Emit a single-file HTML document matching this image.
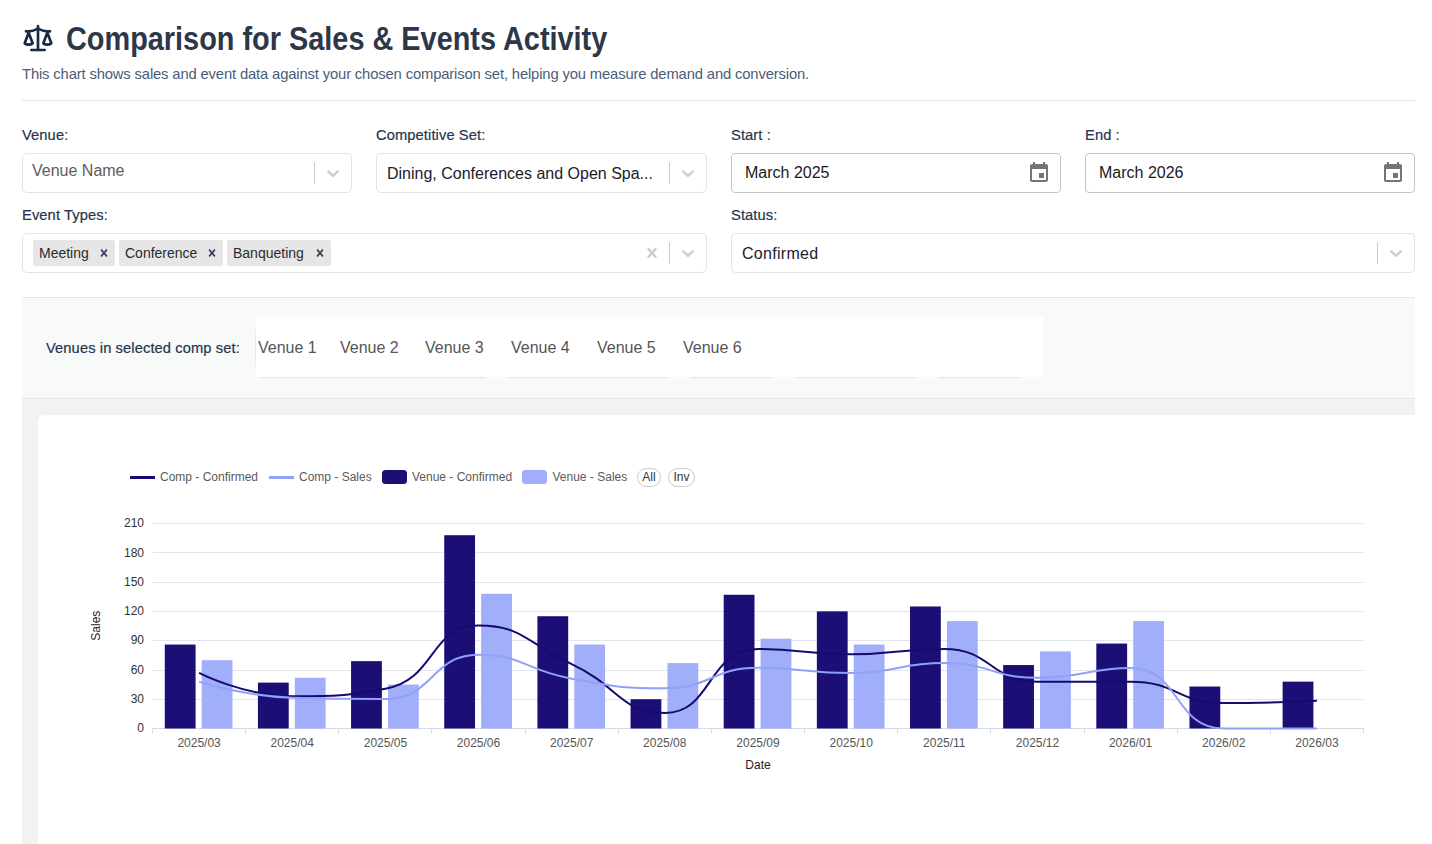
<!DOCTYPE html>
<html>
<head>
<meta charset="utf-8">
<style>
*{box-sizing:border-box;margin:0;padding:0}
html,body{width:1432px;height:844px;overflow:hidden;background:#fff}
body{position:relative;font-family:"Liberation Sans",sans-serif;color:#1a202c}
.abs{position:absolute}
.title{left:66px;top:19px;font-size:33px;font-weight:bold;color:#2d3748;letter-spacing:0;line-height:40px;white-space:nowrap;transform-origin:0 0;transform:scaleX(0.875)}
.sub{left:22px;top:65px;font-size:14.8px;color:#4a5d78;letter-spacing:-0.15px;line-height:18px;white-space:nowrap}
.hr{left:22px;top:100px;width:1393px;height:1px;background:#e2e4ea}
.lbl{font-size:14.7px;font-weight:normal;color:#26354d;line-height:18px;white-space:nowrap;letter-spacing:0.1px;-webkit-text-stroke:0.2px #26354d}
.sel{height:40px;border:1px solid #dfe2e9;border-radius:5px;background:#fff}
.sel .txt{position:absolute;left:10px;top:0;line-height:38px;font-size:16px;white-space:nowrap}
.sep{position:absolute;top:8px;width:1px;height:22px;background:#ccc}
.chev{position:absolute;top:9px;width:20px;height:20px}
.date{height:40px;border:1px solid #c4c4c4;border-radius:4px;background:#fff}
.date .txt{position:absolute;left:13px;top:0;line-height:38px;font-size:16px;color:#1a1a1a;white-space:nowrap}
.cal{position:absolute;top:7px;width:24px;height:24px}
.chip{position:absolute;top:6px;height:26px;background:#e6e6e6;border-radius:2px}
.chip span{position:absolute;left:6px;top:0;line-height:26px;font-size:14px;color:#2b2b2b;white-space:nowrap}
.chip svg{position:absolute;top:6px;width:14px;height:14px}
.band{left:22px;top:297px;width:1393px;height:102px;background:#f8f9f9;border-top:1px solid #e2e5ec;border-bottom:1px solid #e2e5ec}
.gray{left:22px;top:399px;width:1393px;height:445px;background:#f2f2f2}
.card{left:38px;top:415px;width:1400px;height:440px;background:#fff;border-radius:6px}
.shd{top:376px;height:2px;background:#e6e4ee;border-radius:1px;box-shadow:0 0 1px #ecebf2}
.vbox{left:256px;top:317px;width:787px;height:60px;background:#fff}
.vn{position:absolute;top:1px;line-height:60px;font-size:16px;color:#555;white-space:nowrap}
</style>
</head>
<body>
<!-- icon -->
<svg class="abs" style="left:22px;top:22px" width="32" height="32" viewBox="0 0 24 24" fill="none" stroke="#172a46" stroke-width="2" stroke-linecap="round" stroke-linejoin="round"><path d="M16 16l3-8 3 8c-.87.65-1.92 1-3 1s-2.13-.35-3-1Z"/><path d="M2 16l3-8 3 8c-.87.65-1.92 1-3 1s-2.13-.35-3-1Z"/><path d="M7 21h10"/><path d="M12 3v18"/><path d="M3 7h2c2 0 5-1 7-2 2 1 5 2 7 2h2"/></svg>
<div class="abs title">Comparison for Sales &amp; Events Activity</div>
<div class="abs sub">This chart shows sales and event data against your chosen comparison set, helping you measure demand and conversion.</div>
<div class="abs hr"></div>

<div class="abs lbl" style="left:22px;top:126px">Venue:</div>
<div class="abs lbl" style="left:376px;top:126px">Competitive Set:</div>
<div class="abs lbl" style="left:731px;top:126px">Start :</div>
<div class="abs lbl" style="left:1085px;top:126px">End :</div>


<!-- row 1 controls -->
<div class="abs sel" style="left:22px;top:153px;width:330px">
  <div class="txt" style="color:#5c5c5c;top:-2px;left:9px">Venue Name</div>
  <div class="sep" style="left:291px"></div>
  <svg class="chev" style="left:300px" viewBox="0 0 20 20"><path fill="#ccc" d="M4.516 7.548c0.436-0.446 1.043-0.481 1.576 0l3.908 3.747 3.908-3.747c0.533-0.481 1.141-0.446 1.574 0 0.436 0.445 0.408 1.197 0 1.615-0.406 0.418-4.695 4.502-4.695 4.502-0.217 0.223-0.502 0.335-0.787 0.335s-0.57-0.112-0.789-0.335c0 0-4.287-4.084-4.695-4.502s-0.436-1.17 0-1.615z"/></svg>
</div>
<div class="abs sel" style="left:376px;top:153px;width:331px">
  <div class="txt" style="color:#1a202c;top:1px">Dining, Conferences and Open Spa...</div>
  <div class="sep" style="left:292px"></div>
  <svg class="chev" style="left:301px" viewBox="0 0 20 20"><path fill="#ccc" d="M4.516 7.548c0.436-0.446 1.043-0.481 1.576 0l3.908 3.747 3.908-3.747c0.533-0.481 1.141-0.446 1.574 0 0.436 0.445 0.408 1.197 0 1.615-0.406 0.418-4.695 4.502-4.695 4.502-0.217 0.223-0.502 0.335-0.787 0.335s-0.57-0.112-0.789-0.335c0 0-4.287-4.084-4.695-4.502s-0.436-1.17 0-1.615z"/></svg>
</div>
<div class="abs date" style="left:731px;top:153px;width:330px">
  <div class="txt">March 2025</div>
  <svg class="cal" style="left:295px" viewBox="0 0 24 24"><path fill="#757575" d="M17 12h-5v5h5v-5zM16 1v2H8V1H6v2H5c-1.11 0-1.99.9-1.99 2L3 19c0 1.1.89 2 2 2h14c1.1 0 2-.9 2-2V5c0-1.1-.9-2-2-2h-1V1h-2zm3 18H5V8h14v11z"/></svg>
</div>
<div class="abs date" style="left:1085px;top:153px;width:330px">
  <div class="txt">March 2026</div>
  <svg class="cal" style="left:295px" viewBox="0 0 24 24"><path fill="#757575" d="M17 12h-5v5h5v-5zM16 1v2H8V1H6v2H5c-1.11 0-1.99.9-1.99 2L3 19c0 1.1.89 2 2 2h14c1.1 0 2-.9 2-2V5c0-1.1-.9-2-2-2h-1V1h-2zm3 18H5V8h14v11z"/></svg>
</div>

<div class="abs lbl" style="left:22px;top:206px">Event Types:</div>
<div class="abs lbl" style="left:731px;top:206px">Status:</div>

<div class="abs sel" style="left:22px;top:233px;width:685px">
  <div class="chip" style="left:10px;width:82px"><span>Meeting</span><svg style="left:64px" viewBox="0 0 20 20"><path fill="#2c3e5a" d="M14.348 14.849c-0.469 0.469-1.229 0.469-1.697 0l-2.651-3.030-2.651 3.029c-0.469 0.469-1.229 0.469-1.697 0-0.469-0.469-0.469-1.229 0-1.697l2.758-3.15-2.759-3.152c-0.469-0.469-0.469-1.228 0-1.697s1.228-0.469 1.697 0l2.652 3.031 2.651-3.031c0.469-0.469 1.228-0.469 1.697 0s0.469 1.229 0 1.697l-2.758 3.152 2.758 3.15c0.469 0.469 0.469 1.229 0 1.698z"/></svg></div>
  <div class="chip" style="left:96px;width:104px"><span>Conference</span><svg style="left:86px" viewBox="0 0 20 20"><path fill="#2c3e5a" d="M14.348 14.849c-0.469 0.469-1.229 0.469-1.697 0l-2.651-3.030-2.651 3.029c-0.469 0.469-1.229 0.469-1.697 0-0.469-0.469-0.469-1.229 0-1.697l2.758-3.15-2.759-3.152c-0.469-0.469-0.469-1.228 0-1.697s1.228-0.469 1.697 0l2.652 3.031 2.651-3.031c0.469-0.469 1.228-0.469 1.697 0s0.469 1.229 0 1.697l-2.758 3.152 2.758 3.15c0.469 0.469 0.469 1.229 0 1.698z"/></svg></div>
  <div class="chip" style="left:204px;width:104px"><span>Banqueting</span><svg style="left:86px" viewBox="0 0 20 20"><path fill="#2c3e5a" d="M14.348 14.849c-0.469 0.469-1.229 0.469-1.697 0l-2.651-3.030-2.651 3.029c-0.469 0.469-1.229 0.469-1.697 0-0.469-0.469-0.469-1.229 0-1.697l2.758-3.15-2.759-3.152c-0.469-0.469-0.469-1.228 0-1.697s1.228-0.469 1.697 0l2.652 3.031 2.651-3.031c0.469-0.469 1.228-0.469 1.697 0s0.469 1.229 0 1.697l-2.758 3.152 2.758 3.15c0.469 0.469 0.469 1.229 0 1.698z"/></svg></div>
  <svg class="chev" style="left:618.5px" viewBox="0 0 20 20"><path fill="#ccc" d="M14.348 14.849c-0.469 0.469-1.229 0.469-1.697 0l-2.651-3.030-2.651 3.029c-0.469 0.469-1.229 0.469-1.697 0-0.469-0.469-0.469-1.229 0-1.697l2.758-3.15-2.759-3.152c-0.469-0.469-0.469-1.228 0-1.697s1.228-0.469 1.697 0l2.652 3.031 2.651-3.031c0.469-0.469 1.228-0.469 1.697 0s0.469 1.229 0 1.697l-2.758 3.152 2.758 3.15c0.469 0.469 0.469 1.229 0 1.698z"/></svg>
  <div class="sep" style="left:646px"></div>
  <svg class="chev" style="left:655px" viewBox="0 0 20 20"><path fill="#ccc" d="M4.516 7.548c0.436-0.446 1.043-0.481 1.576 0l3.908 3.747 3.908-3.747c0.533-0.481 1.141-0.446 1.574 0 0.436 0.445 0.408 1.197 0 1.615-0.406 0.418-4.695 4.502-4.695 4.502-0.217 0.223-0.502 0.335-0.787 0.335s-0.57-0.112-0.789-0.335c0 0-4.287-4.084-4.695-4.502s-0.436-1.17 0-1.615z"/></svg>
</div>
<div class="abs sel" style="left:731px;top:233px;width:684px">
  <div class="txt" style="color:#1a202c;top:1px;left:10px;letter-spacing:0.3px">Confirmed</div>
  <div class="sep" style="left:645px"></div>
  <svg class="chev" style="left:654px" viewBox="0 0 20 20"><path fill="#ccc" d="M4.516 7.548c0.436-0.446 1.043-0.481 1.576 0l3.908 3.747 3.908-3.747c0.533-0.481 1.141-0.446 1.574 0 0.436 0.445 0.408 1.197 0 1.615-0.406 0.418-4.695 4.502-4.695 4.502-0.217 0.223-0.502 0.335-0.787 0.335s-0.57-0.112-0.789-0.335c0 0-4.287-4.084-4.695-4.502s-0.436-1.17 0-1.615z"/></svg>
</div>

<!-- comp set band -->
<div class="abs band"></div>
<div class="abs lbl" style="left:46px;top:339px">Venues in selected comp set:</div>
<div class="abs shd" style="left:261px;width:225px"></div><div class="abs shd" style="left:508px;width:159px"></div><div class="abs shd" style="left:690px;width:83px"></div><div class="abs shd" style="left:795px;width:120px"></div><div class="abs shd" style="left:938px;width:82px"></div>
<div class="abs vbox">
  <div class="vn" style="left:2px">Venue 1</div>
  <div class="vn" style="left:84px">Venue 2</div>
  <div class="vn" style="left:169px">Venue 3</div>
  <div class="vn" style="left:255px">Venue 4</div>
  <div class="vn" style="left:341px">Venue 5</div>
  <div class="vn" style="left:427px">Venue 6</div>
</div>

<div class="abs" style="left:255px;top:326px;width:1px;height:44px;background:linear-gradient(#f8f9f9,#e9e9ef 20%,#e9e9ef 80%,#f8f9f9)"></div>
<div class="abs gray"></div>
<div class="abs card"></div>

<!--CHART-->
<svg class="abs" style="left:0;top:0" width="1432" height="844" viewBox="0 0 1432 844" font-family="Liberation Sans, sans-serif">
<g font-size="12" fill="#5a5a5a">
<rect x="130" y="476" width="25" height="3" fill="#16096f"/>
<text x="160" y="481">Comp - Confirmed</text>
<rect x="269" y="476" width="25" height="3" fill="#91a1f8"/>
<text x="299" y="481">Comp - Sales</text>
<rect x="382" y="470" width="25" height="14" rx="3.5" fill="#1b0f76"/>
<text x="412" y="481">Venue - Confirmed</text>
<rect x="522" y="470" width="25" height="14" rx="3.5" fill="#a1aefa"/>
<text x="552.5" y="481">Venue - Sales</text>
<rect x="637.5" y="468.5" width="23" height="18" rx="9" fill="#fff" stroke="#c9c9c9"/>
<text x="649" y="481" text-anchor="middle" fill="#333">All</text>
<rect x="668.5" y="468.5" width="26" height="18" rx="9" fill="#fff" stroke="#c9c9c9"/>
<text x="681.5" y="481" text-anchor="middle" fill="#333">Inv</text>
</g>
<g stroke="#e0e6f1" stroke-width="1">
<line x1="152.5" y1="699.5" x2="1363.5" y2="699.5"/>
<line x1="152.5" y1="670.5" x2="1363.5" y2="670.5"/>
<line x1="152.5" y1="640.5" x2="1363.5" y2="640.5"/>
<line x1="152.5" y1="611.5" x2="1363.5" y2="611.5"/>
<line x1="152.5" y1="582.5" x2="1363.5" y2="582.5"/>
<line x1="152.5" y1="552.5" x2="1363.5" y2="552.5"/>
<line x1="152.5" y1="523.5" x2="1363.5" y2="523.5"/>
</g>
<g font-size="12" fill="#333" text-anchor="end">
<text x="144" y="732.2">0</text>
<text x="144" y="702.9">30</text>
<text x="144" y="673.6">60</text>
<text x="144" y="644.3">90</text>
<text x="144" y="615.1">120</text>
<text x="144" y="585.8">150</text>
<text x="144" y="556.5">180</text>
<text x="144" y="527.2">210</text>
</g>
<g stroke="#d5dae6" stroke-width="1">
<line x1="152.5" y1="728.5" x2="1364.0" y2="728.5"/>
<line x1="152.5" y1="728.5" x2="152.5" y2="733.5"/>
<line x1="245.5" y1="728.5" x2="245.5" y2="733.5"/>
<line x1="338.5" y1="728.5" x2="338.5" y2="733.5"/>
<line x1="431.5" y1="728.5" x2="431.5" y2="733.5"/>
<line x1="525.5" y1="728.5" x2="525.5" y2="733.5"/>
<line x1="618.5" y1="728.5" x2="618.5" y2="733.5"/>
<line x1="711.5" y1="728.5" x2="711.5" y2="733.5"/>
<line x1="804.5" y1="728.5" x2="804.5" y2="733.5"/>
<line x1="897.5" y1="728.5" x2="897.5" y2="733.5"/>
<line x1="990.5" y1="728.5" x2="990.5" y2="733.5"/>
<line x1="1084.5" y1="728.5" x2="1084.5" y2="733.5"/>
<line x1="1177.5" y1="728.5" x2="1177.5" y2="733.5"/>
<line x1="1270.5" y1="728.5" x2="1270.5" y2="733.5"/>
<line x1="1363.5" y1="728.5" x2="1363.5" y2="733.5"/>
</g>
<g>
<rect x="164.78" y="644.55" width="30.8" height="83.95" fill="#1b0f76"/>
<rect x="201.68" y="660.17" width="30.8" height="68.33" fill="#a1aefa"/>
<rect x="257.93" y="682.62" width="30.8" height="45.88" fill="#1b0f76"/>
<rect x="294.83" y="677.74" width="30.8" height="50.76" fill="#a1aefa"/>
<rect x="351.08" y="661.14" width="30.8" height="67.36" fill="#1b0f76"/>
<rect x="387.98" y="684.57" width="30.8" height="43.93" fill="#a1aefa"/>
<rect x="444.24" y="535.21" width="30.8" height="193.29" fill="#1b0f76"/>
<rect x="481.14" y="593.79" width="30.8" height="134.71" fill="#a1aefa"/>
<rect x="537.39" y="616.24" width="30.8" height="112.26" fill="#1b0f76"/>
<rect x="574.29" y="644.55" width="30.8" height="83.95" fill="#a1aefa"/>
<rect x="630.55" y="699.21" width="30.8" height="29.29" fill="#1b0f76"/>
<rect x="667.45" y="663.10" width="30.8" height="65.40" fill="#a1aefa"/>
<rect x="723.70" y="594.76" width="30.8" height="133.74" fill="#1b0f76"/>
<rect x="760.60" y="638.69" width="30.8" height="89.81" fill="#a1aefa"/>
<rect x="816.85" y="611.36" width="30.8" height="117.14" fill="#1b0f76"/>
<rect x="853.75" y="644.55" width="30.8" height="83.95" fill="#a1aefa"/>
<rect x="910.01" y="606.48" width="30.8" height="122.02" fill="#1b0f76"/>
<rect x="946.91" y="621.12" width="30.8" height="107.38" fill="#a1aefa"/>
<rect x="1003.16" y="665.05" width="30.8" height="63.45" fill="#1b0f76"/>
<rect x="1040.06" y="651.38" width="30.8" height="77.12" fill="#a1aefa"/>
<rect x="1096.32" y="643.57" width="30.8" height="84.93" fill="#1b0f76"/>
<rect x="1133.22" y="621.12" width="30.8" height="107.38" fill="#a1aefa"/>
<rect x="1189.47" y="686.52" width="30.8" height="41.98" fill="#1b0f76"/>
<rect x="1282.62" y="681.64" width="30.8" height="46.86" fill="#1b0f76"/>
</g>
<path d="M199.08 672.86C199.08 672.86 245.02 696.29 292.23 696.29C338.17 696.29 343.14 696.29 385.38 688.77C436.29 679.71 429.39 625.51 478.54 625.51C522.54 625.51 526.10 642.69 571.69 664.07C619.25 686.37 619.94 712.88 664.85 712.88C713.09 712.88 706.98 648.94 758.00 648.94C800.13 648.94 804.58 654.31 851.15 654.31C897.73 654.31 899.05 648.94 944.31 648.94C992.20 648.94 989.53 681.64 1037.46 681.64C1082.69 681.64 1084.64 681.64 1130.62 681.64C1177.80 681.64 1176.60 703.12 1223.77 703.12C1269.75 703.12 1316.92 700.87 1316.92 700.87" fill="none" stroke="#16096f" stroke-width="2" stroke-linejoin="bevel"/>
<path d="M199.08 681.64C199.08 681.64 245.31 696.46 292.23 697.75C338.47 699.02 341.17 699.02 385.38 699.02C434.32 699.02 430.34 654.80 478.54 654.80C523.49 654.80 524.49 670.23 571.69 678.71C617.65 686.97 618.70 688.28 664.85 688.28C711.85 688.28 710.91 667.78 758.00 667.78C804.06 667.78 804.67 673.05 851.15 673.05C897.83 673.05 897.88 663.10 944.31 663.10C991.04 663.10 990.73 677.74 1037.46 677.74C1083.88 677.74 1088.00 667.98 1130.62 667.98C1181.16 667.98 1173.10 728.50 1223.77 728.50C1266.26 728.50 1316.92 728.50 1316.92 728.50" fill="none" stroke="#91a1f8" stroke-width="2" stroke-linejoin="bevel"/>
<g font-size="12" fill="#555" text-anchor="middle">
<text x="199.1" y="747">2025/03</text>
<text x="292.2" y="747">2025/04</text>
<text x="385.4" y="747">2025/05</text>
<text x="478.5" y="747">2025/06</text>
<text x="571.7" y="747">2025/07</text>
<text x="664.8" y="747">2025/08</text>
<text x="758.0" y="747">2025/09</text>
<text x="851.2" y="747">2025/10</text>
<text x="944.3" y="747">2025/11</text>
<text x="1037.5" y="747">2025/12</text>
<text x="1130.6" y="747">2026/01</text>
<text x="1223.8" y="747">2026/02</text>
<text x="1316.9" y="747">2026/03</text>
</g>
<text x="758" y="769" font-size="12" fill="#222" text-anchor="middle">Date</text>
<text transform="translate(100.3,625.7) rotate(-90)" font-size="12" fill="#222" text-anchor="middle">Sales</text>
</svg>
<!--/CHART-->
</body>
</html>
